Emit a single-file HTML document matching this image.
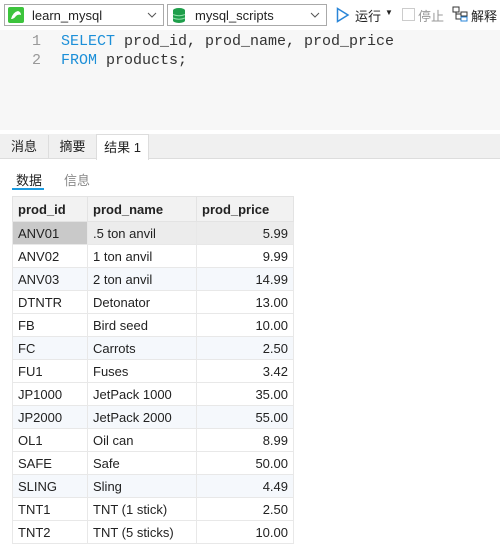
<!DOCTYPE html><html><head><meta charset="utf-8"><style>
body{margin:0;width:500px;height:550px;background:#fff;font-family:"Liberation Sans","Noto Sans CJK SC",sans-serif;font-size:13px;color:#222;position:relative;overflow:hidden}
.abs{position:absolute}
.sel{position:absolute;top:4px;height:22px;border:1px solid #aaa;background:#fff;box-sizing:border-box}
.sel span{position:absolute;left:27px;top:3px;font-size:13px}
.sel svg.ch{position:absolute;right:6px;top:7px}
.ed{position:absolute;top:30px;left:0;width:500px;height:100px;background:#f7f7f7}
.code{font-family:"Liberation Mono",monospace;font-size:15px;position:absolute}
table{border-collapse:collapse;position:absolute;left:12px;top:196px}
td{height:23px;padding:0 5px;border:1px solid #e8e8e8;font-size:13px;color:#222;box-sizing:border-box}
th{height:25px;padding:0 5px;text-align:left;font-weight:bold;font-size:13px;background:#f2f2f2;border:1px solid #e3e3e3;box-sizing:border-box}
td.p{text-align:right}
tr.a td{background:#f5f8fc}
</style></head><body>
<div class="sel" style="left:4px;width:160px"><svg class="abs" style="left:3px;top:2px" width="16" height="16"><rect width="16" height="16" rx="2" fill="#3cc43c"/><path d="M3 12 Q5 5 10 4 Q13 5 13 8 Q10 7 8 9 Q6 12 3 12Z" fill="#fff"/></svg><span>learn_mysql</span><svg class="ch" width="10" height="6"><path d="M1 1 L5 5 L9 1" stroke="#555" fill="none"/></svg></div>
<div class="sel" style="left:167px;width:160px"><svg class="abs" style="left:4px;top:2px" width="14" height="17"><ellipse cx="7" cy="3.5" rx="6" ry="2.5" fill="#1e9e4a"/><rect x="1" y="3.5" width="12" height="10" fill="#1e9e4a"/><ellipse cx="7" cy="13.5" rx="6" ry="2.5" fill="#1e9e4a"/><path d="M1 7.5 Q7 10 13 7.5M1 11 Q7 13.5 13 11" stroke="#8fe0a8" fill="none"/></svg><span>mysql_scripts</span><svg class="ch" width="10" height="6"><path d="M1 1 L5 5 L9 1" stroke="#555" fill="none"/></svg></div>
<svg class="abs" style="left:336px;top:7px" width="14" height="16"><path d="M1.5 1.5 L12 8 L1.5 14.5Z" fill="none" stroke="#2a86d8" stroke-width="1.5"/></svg>
<div class="abs" style="left:355px;top:6px">运行</div>
<div class="abs" style="left:385px;top:8px;font-size:8px">▼</div>
<div class="abs" style="left:402px;top:8px;width:11px;height:11px;border:1px solid #ccc"></div>
<div class="abs" style="left:418px;top:6px;color:#999">停止</div>
<svg class="abs" style="left:452px;top:6px" width="16" height="16"><rect x="1" y="1" width="6" height="5" fill="none" stroke="#333"/><rect x="9" y="6" width="6" height="4" fill="none" stroke="#333"/><rect x="9" y="11" width="6" height="4" fill="none" stroke="#2a86d8"/><path d="M4 6 V13 H9 M4 8 H9" stroke="#333" fill="none"/></svg>
<div class="abs" style="left:471px;top:6px">解释</div>
<div class="ed"></div>
<div class="code" style="left:32px;top:33px;color:#999">1</div>
<div class="code" style="left:32px;top:52px;color:#999">2</div>
<div class="code" style="left:61px;top:33px;color:#333"><span style="color:#1c8fd8">SELECT</span> prod_id, prod_name, prod_price</div>
<div class="code" style="left:61px;top:52px;color:#333"><span style="color:#1c8fd8">FROM</span> products;</div>
<div class="abs" style="left:0;top:134px;width:500px;height:24px;background:#f0f0f0;border-bottom:1px solid #ddd"></div>
<div class="abs" style="left:0;top:135px;width:48px;height:23px;border-right:1px solid #ddd;text-align:center;line-height:24px">消息</div>
<div class="abs" style="left:49px;top:135px;width:47px;height:23px;border-right:1px solid #ddd;text-align:center;line-height:24px">摘要</div>
<div class="abs" style="left:96px;top:134px;width:51px;height:25px;background:#fff;border:1px solid #ddd;border-bottom:none;text-align:center;line-height:25px">结果 1</div>
<div class="abs" style="left:16px;top:170px">数据</div>
<div class="abs" style="left:12px;top:188px;width:32px;height:2px;background:#1c9be0"></div>
<div class="abs" style="left:64px;top:170px;color:#888">信息</div>
<table>
<tr><th style="width:75px">prod_id</th><th style="width:109px">prod_name</th><th style="width:97px">prod_price</th></tr>
<tr><td style="background:#c9c9c9">ANV01</td><td style="background:#ececec">.5 ton anvil</td><td class="p" style="background:#ececec">5.99</td></tr>
<tr><td>ANV02</td><td>1 ton anvil</td><td class="p">9.99</td></tr>
<tr class="a"><td>ANV03</td><td>2 ton anvil</td><td class="p">14.99</td></tr>
<tr><td>DTNTR</td><td>Detonator</td><td class="p">13.00</td></tr>
<tr><td>FB</td><td>Bird seed</td><td class="p">10.00</td></tr>
<tr class="a"><td>FC</td><td>Carrots</td><td class="p">2.50</td></tr>
<tr><td>FU1</td><td>Fuses</td><td class="p">3.42</td></tr>
<tr><td>JP1000</td><td>JetPack 1000</td><td class="p">35.00</td></tr>
<tr class="a"><td>JP2000</td><td>JetPack 2000</td><td class="p">55.00</td></tr>
<tr><td>OL1</td><td>Oil can</td><td class="p">8.99</td></tr>
<tr><td>SAFE</td><td>Safe</td><td class="p">50.00</td></tr>
<tr class="a"><td>SLING</td><td>Sling</td><td class="p">4.49</td></tr>
<tr><td>TNT1</td><td>TNT (1 stick)</td><td class="p">2.50</td></tr>
<tr><td>TNT2</td><td>TNT (5 sticks)</td><td class="p">10.00</td></tr>
</table>
</body></html>
